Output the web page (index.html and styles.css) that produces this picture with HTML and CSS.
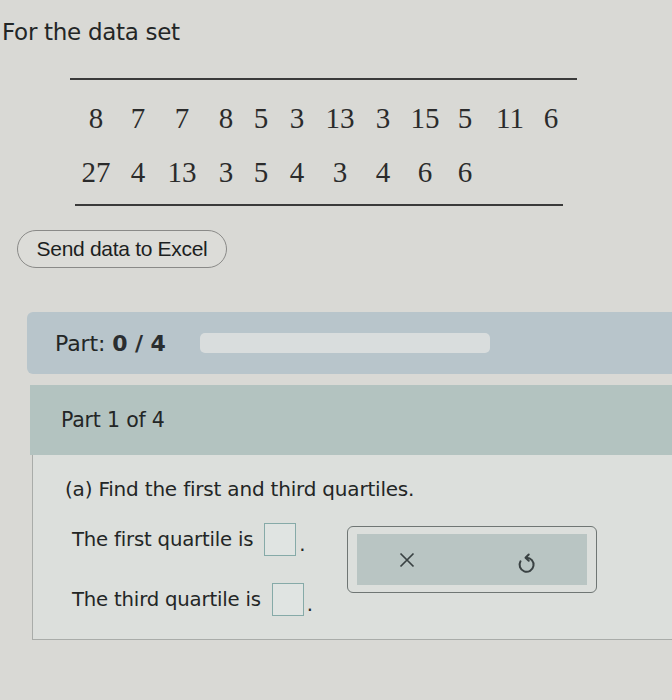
FILE: index.html
```html
<!DOCTYPE html>
<html>
<head>
<meta charset="utf-8">
<link rel="stylesheet" href="styles.css">
</head>
<body>
<div class="page">
  <div class="title">For the data set</div>
  <div class="rule rule-top"></div>
  <div class="data">
    <div class="row">
      <span>8</span><span>7</span><span>7</span><span>8</span><span>5</span><span>3</span><span>13</span><span>3</span><span>15</span><span>5</span><span>11</span><span>6</span>
    </div>
    <div class="row">
      <span>27</span><span>4</span><span>13</span><span>3</span><span>5</span><span>4</span><span>3</span><span>4</span><span>6</span><span>6</span>
    </div>
  </div>
  <div class="rule rule-bottom"></div>
  <button class="excel">Send data to Excel</button>

  <div class="part-bar">
    <span class="part-label">Part: <b>0 / 4</b></span>
    <div class="track"></div>
  </div>

  <div class="panel">
    <div class="panel-head">Part 1 of 4</div>
    <div class="panel-body">
      <p class="question">(a) Find the first and third quartiles.</p>
      <div class="work">
        <div class="answers">
          <div class="line">The first quartile is <span class="box"></span><span class="dot">.</span></div>
          <div class="line">The third quartile is <span class="box"></span><span class="dot">.</span></div>
        </div>
        <div class="tools">
          <div class="tools-inner">
            <svg class="icon" viewBox="0 0 20 20" width="20" height="20"><path d="M3.5 3.5 L16.5 16.5 M16.5 3.5 L3.5 16.5" stroke="#3a4243" stroke-width="1.7" fill="none"/></svg>
            <svg class="icon icon-undo" viewBox="0 0 20 20" width="25" height="25"><path d="M10 6.2 A5.6 5.6 0 1 1 5.2 9" stroke="#3a4243" stroke-width="1.6" fill="none" stroke-linecap="round"/><path d="M11.8 3.6 L9.2 6.2 L11.8 8.6" stroke="#3a4243" stroke-width="1.6" fill="none" stroke-linecap="round" stroke-linejoin="round"/></svg>
          </div>
        </div>
      </div>
    </div>
  </div>
</div>
</body>
</html>
```
FILE: styles.css
```css
html, body {
  margin: 0;
  padding: 0;
  background: #d9d9d5;
}
.page {
  width: 672px;
  height: 700px;
  overflow: hidden;
  padding-top: 18px;
  box-sizing: border-box;
  font-family: "DejaVu Sans", Verdana, sans-serif;
  color: #232626;
}
.title {
  font-size: 23px;
  line-height: 28px;
  padding-left: 2px;
  letter-spacing: -0.3px;
}
.rule {
  height: 2px;
  background: #3a3a3a;
}
.rule-top {
  margin: 32px 0 0 70px;
  width: 507px;
}
.rule-bottom {
  margin: 5px 0 0 75px;
  width: 488px;
}
.data {
  font-family: "Liberation Serif", "Times New Roman", serif;
  font-size: 29px;
  color: #2b2b2b;
  padding-top: 11px;
}
.row {
  display: grid;
  grid-template-columns: 40px 44px 44px 44px 26px 46px 40px 46px 38px 42px 48px 34px;
  justify-items: center;
  align-items: center;
  height: 54px;
  margin-left: 76px;
}
.excel {
  display: block;
  margin: 24px 0 0 17px;
  width: 210px;
  height: 38px;
  border: 1px solid #8a8a88;
  border-radius: 19px;
  background: #dcdcd8;
  font-family: "Liberation Sans", Arial, sans-serif;
  font-size: 21px;
  letter-spacing: -0.3px;
  color: #1c1f1f;
  padding: 0;
}
.part-bar {
  margin: 44px 0 0 27px;
  height: 62px;
  background: #b8c5cb;
  border-radius: 6px 0 0 6px;
  display: flex;
  align-items: center;
  padding-left: 28px;
}
.part-label {
  font-size: 22px;
  width: 145px;
  letter-spacing: -0.1px;
}
.part-label b {
  font-weight: bold;
  color: #2a2e30;
}
.track {
  width: 290px;
  height: 20px;
  border-radius: 5px;
  background: #d9dddd;
}
.panel {
  margin: 11px 0 0 30px;
}
.panel-head {
  height: 70px;
  background: #b3c3c0;
  display: flex;
  align-items: center;
  padding-left: 31px;
  font-size: 20.5px;
  letter-spacing: -0.2px;
}
.panel-body {
  height: 185px;
  box-sizing: border-box;
  margin-left: 2px;
  border-left: 1px solid #a9aca9;
  border-bottom: 1px solid #a9aca9;
  background: #dcdfdc;
  padding: 21px 0 0 32px;
}
.question {
  margin: 0;
  font-size: 20px;
  line-height: 26px;
  letter-spacing: -0.2px;
}
.work {
  display: flex;
  margin-top: 2px;
}
.answers {
  width: 275px;
  padding-left: 7px;
  padding-top: 18px;
}
.line {
  display: flex;
  align-items: center;
  font-size: 19.7px;
  letter-spacing: -0.2px;
  height: 34px;
  margin-bottom: 26px;
}
.box {
  display: inline-block;
  width: 30px;
  height: 31px;
  border: 1.5px solid #86aaa8;
  background: #e0e4e2;
  margin-left: 11px;
}
.dot {
  margin-left: 3px;
  align-self: flex-end;
  line-height: 22px;
}
.tools {
  width: 250px;
  height: 67px;
  box-sizing: border-box;
  border: 1.5px solid #6f7674;
  border-radius: 6px;
  padding: 7px 9px;
  margin-top: 22px;
}
.tools-inner {
  height: 100%;
  background: #b9c5c3;
  display: flex;
  align-items: center;
  padding-left: 40px;
  gap: 97px;
}
.icon {
  display: block;
}
.icon-undo {
  margin-top: 6px;
}
```
